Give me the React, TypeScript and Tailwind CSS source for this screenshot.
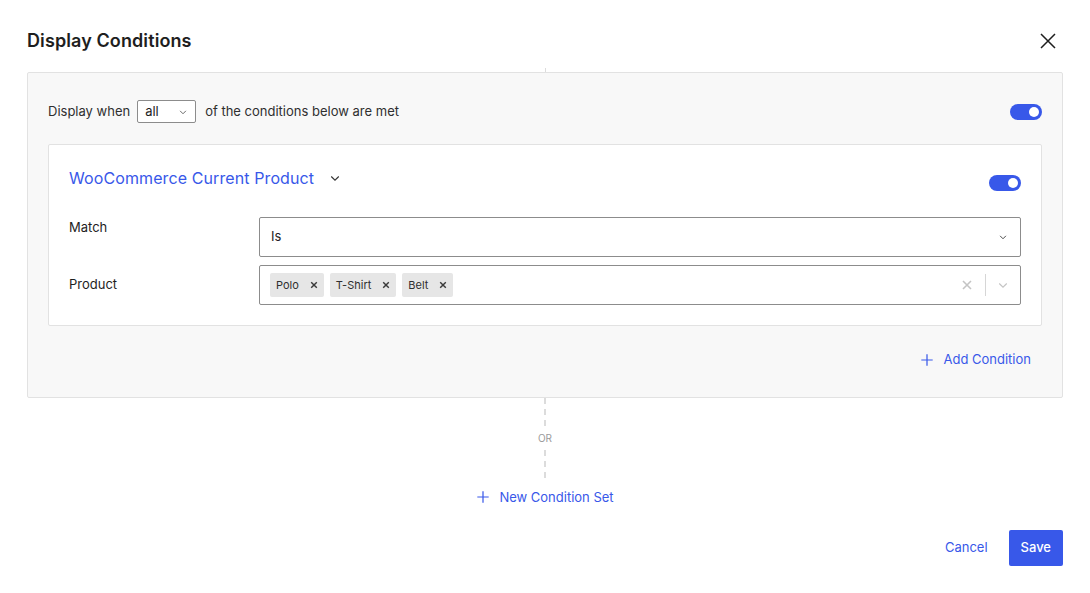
import React from "react";

const Toggle = () => (
  <div className="w-8 h-4 rounded-full bg-[#3858e9] flex items-center justify-end pr-[3px]">
    <div className="w-[10px] h-[10px] rounded-full bg-white" />
  </div>
);

const Chevron = ({ className = "" }: { className?: string }) => (
  <svg viewBox="0 0 24 24" className={className} fill="none" stroke="currentColor" strokeWidth="1.5">
    <path d="M7 10l5 5 5-5" />
  </svg>
);

const Plus = () => (
  <svg viewBox="0 0 16 16" className="w-[14px] h-[14px]" fill="none" stroke="currentColor" strokeWidth="1.4">
    <path d="M8 1.5v13M1.5 8h13" />
  </svg>
);

const Tag = ({ label }: { label: string }) => (
  <span className="flex items-center h-6 bg-[#e6e6e6] rounded-[2px] pl-[6px] pr-[6px] gap-[11px] text-[11px] text-[#2f2f2f]">
    {label}
    <svg viewBox="0 0 10 10" className="w-[8px] h-[8px]" stroke="#3a3a3a" strokeWidth="1.8">
      <path d="M1.5 1.5l7 7M8.5 1.5l-7 7" />
    </svg>
  </span>
);

export default function App() {
  return (
    <div
      className="w-[1090px] h-[593px] bg-white text-[#1e1e1e] flex flex-col px-[27px]"
      style={{ fontFamily: "Inter, 'Noto Sans', sans-serif" }}
    >
      {/* Header */}
      <div className="flex items-center justify-between h-[60px] pt-[21px] pb-0">
        <h1 className="text-[18px] font-semibold tracking-[0.1px]">Display Conditions</h1>
        <svg viewBox="0 0 24 24" className="w-6 h-6 mr-[3px]" fill="none" stroke="#1e1e1e" strokeWidth="1.5">
          <path d="M5 5l14 14M19 5L5 19" />
        </svg>
      </div>

      <div className="flex flex-col items-center">
        <div className="w-px h-[4px] bg-[#dcdcdc] mt-[8px]" />
      </div>

      {/* Condition set */}
      <div className="bg-[#f8f8f8] border border-[#e2e2e2] rounded-[2px] px-5 pt-[27px] pb-[27px]">
        <div className="flex items-center justify-between">
          <div className="flex items-center text-[13px] text-[#2f2f2f]">
            <span>Display when</span>
            <div className="ml-[7px] w-[59px] h-[23px] border border-[#8c8c8c] rounded-[2px] bg-white flex items-center justify-between pl-[7px] pr-[5px]">
              <span className="text-[13px] text-[#1e1e1e]">all</span>
              <Chevron className="w-[14px] h-[14px] text-[#555]" />
            </div>
            <span className="ml-[9px]">of the conditions below are met</span>
          </div>
          <Toggle />
        </div>

        {/* Condition card */}
        <div className="mt-[21px] bg-white border border-[#e2e2e2] rounded-[2px] px-5 pt-[21px] pb-5">
          <div className="flex items-start justify-between">
            <div className="flex items-center">
              <span className="text-[16px] text-[#3858e9] tracking-[0.1px]">WooCommerce Current Product</span>
              <Chevron className="ml-[12px] w-[18px] h-[18px] text-[#333]" />
            </div>
            <div className="mt-[9px]">
              <Toggle />
            </div>
          </div>

          <div className="mt-[26px] grid grid-cols-[190px_1fr] gap-y-[8px] text-[13px]">
            <div className="pt-[1px]">Match</div>
            <div className="h-10 border border-[#8c8c8c] rounded-[2px] flex items-center justify-between pl-[11px] pr-[10px]">
              <span className="text-[13px]">Is</span>
              <Chevron className="w-[14px] h-[14px] text-[#333]" />
            </div>

            <div className="flex items-center">Product</div>
            <div className="h-10 border border-[#8c8c8c] rounded-[2px] flex items-center justify-between pl-[10px]">
              <div className="flex items-center gap-[6px]">
                <Tag label="Polo" />
                <Tag label="T-Shirt" />
                <Tag label="Belt" />
              </div>
              <div className="flex items-center h-full">
                <svg viewBox="0 0 10 10" className="w-[10px] h-[10px] mr-[13px]" stroke="#c4c4c4" strokeWidth="1.6">
                  <path d="M1 1l8 8M9 1L1 9" />
                </svg>
                <div className="w-px h-[22px] bg-[#d6d6d6]" />
                <Chevron className="w-[18px] h-[18px] mx-[8px] text-[#c4c4c4]" />
              </div>
            </div>
          </div>
        </div>

        <div className="flex justify-end mt-[24px] pr-[11px]">
          <button className="flex items-center gap-[9px] text-[13px] text-[#3858e9]">
            <Plus />
            Add Condition
          </button>
        </div>
      </div>

      {/* OR separator */}
      <div className="flex flex-col items-center">
        <div className="h-[28px] border-l-2 border-dashed border-[#dcdcdc]" />
        <span className="text-[10px] text-[#9a9a9a] my-[5px] leading-[14px]">OR</span>
        <div className="h-[28px] border-l-2 border-dashed border-[#dcdcdc]" />
        <button className="mt-[10px] flex items-center gap-[9px] text-[13px] text-[#3858e9]">
          <Plus />
          New Condition Set
        </button>
      </div>

      {/* Footer */}
      <div className="flex justify-end items-center mt-[23px] gap-5">
        <button className="text-[13px] text-[#3858e9] mr-[1px]">Cancel</button>
        <button className="h-9 px-[12px] bg-[#3858e9] text-white text-[13px] font-medium rounded-[2px]">Save</button>
      </div>
    </div>
  );
}
